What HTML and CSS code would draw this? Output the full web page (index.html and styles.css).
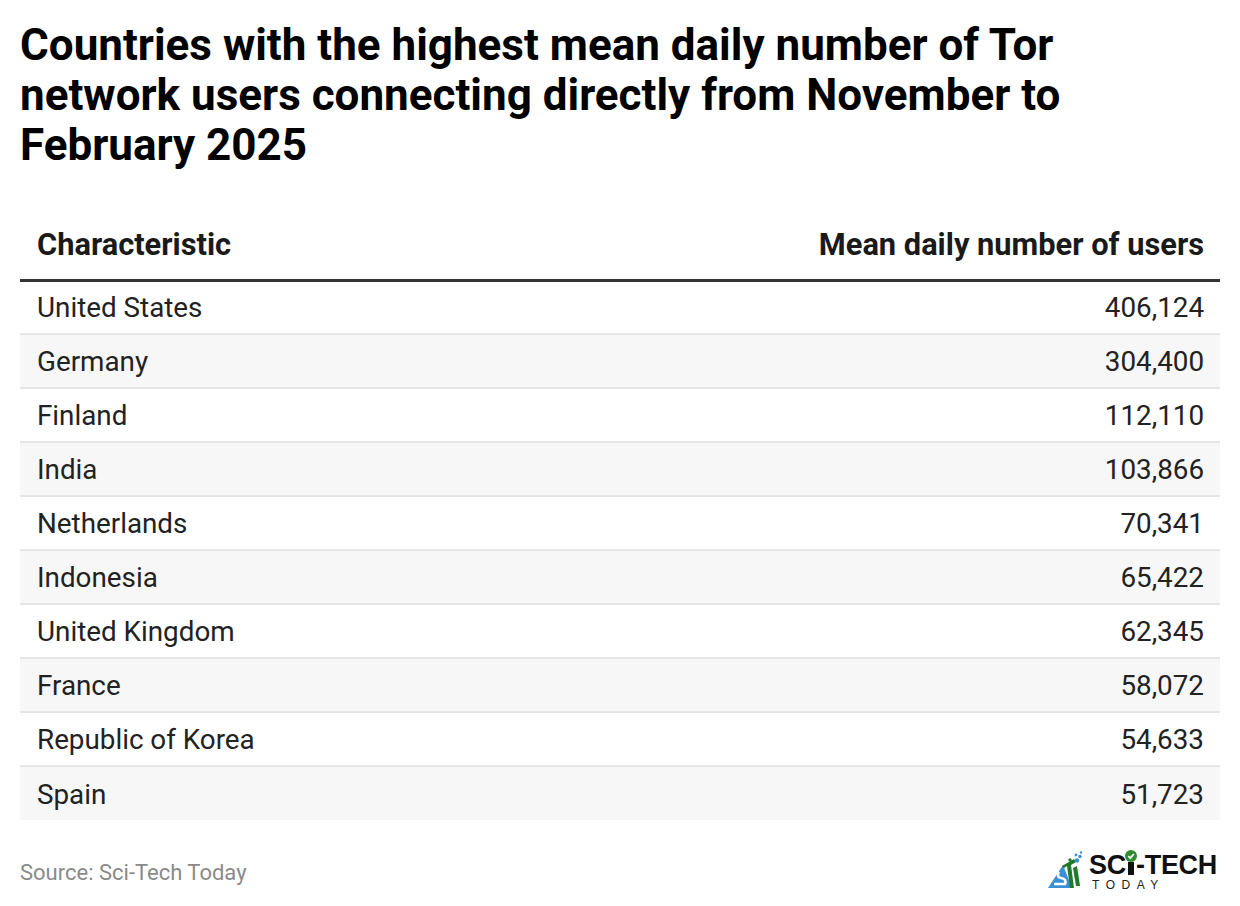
FILE: index.html
```html
<!DOCTYPE html>
<html lang="en">
<head>
<meta charset="utf-8">
<title>Tor users</title>
<link rel="stylesheet" href="styles.css">
</head>
<body>
<div class="page">
  <h1 class="title">Countries with the highest mean daily number of Tor network users connecting directly from November to February 2025</h1>
  <table class="data">
    <thead>
      <tr><th class="left">Characteristic</th><th class="right">Mean daily number of users</th></tr>
    </thead>
    <tbody>
      <tr><td>United States</td><td class="num">406,124</td></tr>
      <tr><td>Germany</td><td class="num">304,400</td></tr>
      <tr><td>Finland</td><td class="num">112,110</td></tr>
      <tr><td>India</td><td class="num">103,866</td></tr>
      <tr><td>Netherlands</td><td class="num">70,341</td></tr>
      <tr><td>Indonesia</td><td class="num">65,422</td></tr>
      <tr><td>United Kingdom</td><td class="num">62,345</td></tr>
      <tr><td>France</td><td class="num">58,072</td></tr>
      <tr><td>Republic of Korea</td><td class="num">54,633</td></tr>
      <tr><td>Spain</td><td class="num">51,723</td></tr>
    </tbody>
  </table>
  <div class="footer">
    <span class="source">Source: Sci-Tech Today</span>
    <div class="logo">
      <svg class="mark" width="44" height="44" viewBox="0 0 44 44">
        <path d="M3 38 L18 15 L27 38 Z" fill="#3a8fd6"/>
        <path d="M9 34 L20 34 Q22 29 16 28 Q11 27 14 22" stroke="#fff" stroke-width="2.6" fill="none"/>
        <path d="M17 16 L29 9 L31 12 L26 15 L29 38 L25 38 L22 16 L19 18 Z" fill="#1f7a2a"/>
        <path d="M28 18 L32 16 L35 36 L31 36 Z" fill="#1f7a2a"/>
        <circle cx="25" cy="10" r="1.7" fill="#1f7a2a"/>
        <circle cx="32" cy="10.5" r="2.2" fill="#3a8fd6"/>
        <circle cx="35" cy="6.5" r="1.7" fill="#3a8fd6"/>
        <circle cx="31" cy="5" r="1.4" fill="#3a8fd6"/>
        <circle cx="36" cy="2.5" r="1.2" fill="#3a8fd6"/>
      </svg>
      <div class="wordmark">
        <div class="sci">SC<span class="ichk">I<svg class="check" width="12" height="12" viewBox="0 0 12 12"><circle cx="6" cy="6" r="6" fill="#2e8b2e"/><path d="M3.2 6.2 L5.3 8.2 L8.8 4" stroke="#fff" stroke-width="1.8" fill="none"/></svg></span>-TECH</div>
        <div class="today">TODAY</div>
      </div>
    </div>
  </div>
</div>
</body>
</html>
```
FILE: styles.css
```css
* { box-sizing: border-box; }
html, body { margin: 0; padding: 0; background: #ffffff; }
body { font-family: Roboto, "Liberation Sans", Arial, sans-serif; color: #222; }
.page { width: 1240px; padding: 20px 20px 0 20px; }
.title {
  margin: 0;
  font-size: 44px;
  line-height: 50px;
  font-weight: 700;
  color: #000;
  padding-right: 120px;
}
.data {
  width: 1200px;
  margin-top: 47px;
  border-collapse: collapse;
}
.data th {
  font-size: 30.8px;
  font-weight: 700;
  color: #1a1a1a;
  padding: 0 16px 17px 17px;
  height: 63px;
  vertical-align: bottom;
  border-bottom: 3px solid #333;
  line-height: 34px;
}
.data th.left { text-align: left; }
.data th.right { text-align: right; }
.data td {
  font-size: 27.8px;
  color: #222;
  height: 54px;
  padding: 2px 16px 0 17px;
  line-height: 30px;
  border-bottom: 2px solid #e6e6e6;
  vertical-align: middle;
}
.data tbody tr:nth-child(even) td { background: #f7f7f7; }
.data tbody tr:last-child td { border-bottom: none; }
.data td.num { text-align: right; }
.footer {
  display: flex;
  justify-content: space-between;
  align-items: center;
  margin-top: 30px;
}
.source { font-size: 22px; color: #8a8a8a; }
.logo { display: flex; align-items: flex-end; margin-right: 3px; }
.mark { display: block; margin-right: 0; }
.wordmark { display: flex; flex-direction: column; padding-bottom: 2px; }
.sci {
  font-family: "Liberation Sans", Arial, sans-serif;
  font-weight: 700;
  font-size: 27px;
  line-height: 24px;
  color: #111;
  letter-spacing: -0.3px;
}
.ichk { position: relative; display: inline-block; width: 10px; color: transparent; }
.ichk::after {
  content: "";
  position: absolute;
  left: 2px;
  top: 9px;
  width: 6px;
  height: 13px;
  background: #111;
}
.check { position: absolute; left: -1px; top: -3px; }
.today {
  font-family: "Liberation Sans", Arial, sans-serif;
  font-size: 12px;
  letter-spacing: 6.5px;
  color: #222;
  line-height: 14px;
  margin-left: 3px;
  margin-top: 1px;
}
```
